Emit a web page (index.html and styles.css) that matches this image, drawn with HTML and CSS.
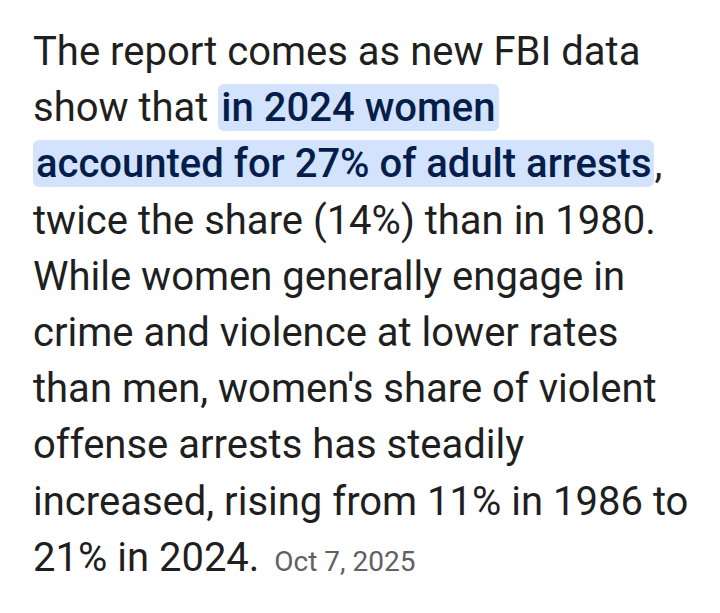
FILE: index.html
```html
<!DOCTYPE html>
<html lang="en">
<head>
<meta charset="utf-8">
<title>Snippet</title>
<link rel="stylesheet" href="styles.css">
</head>
<body>
<main class="snippet">
<p class="text">The report comes as new FBI data show that <mark class="hl">in 2024 women accounted for 27% of adult arrests</mark>, twice the share (14%) than in 1980. While women generally engage in crime and violence at lower rates than men, women's share of violent offense arrests has steadily increased, rising from 11% in 1986 to 21% in 2024. <span class="date">Oct 7, 2025</span></p>
</main>
</body>
</html>
```
FILE: styles.css
```css
html, body {
  margin: 0;
  padding: 0;
  background: #ffffff;
}
.snippet {
  padding: 24px 0 0 33px;
  width: 690px;
  box-sizing: border-box;
}
.text {
  margin: 0;
  font-family: Roboto, "Noto Sans", sans-serif;
  font-size: 40px;
  line-height: 56.2px;
  color: #1f1f1f;
}
.hl {
  background: #d3e3fd;
  color: #041e49;
  font-weight: 500;
  padding: 0 3px;
  border-radius: 6px;
  -webkit-box-decoration-break: clone;
  box-decoration-break: clone;
}
.date {
  font-size: 28px;
  color: #616161;
  margin-left: 5px;
}
```
